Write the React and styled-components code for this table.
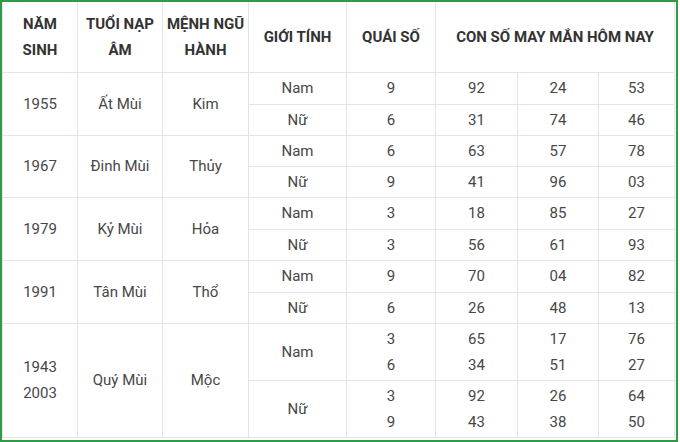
import React from "react";
import styled, { createGlobalStyle } from "styled-components";

const Global = createGlobalStyle`
  html, body { margin: 0; padding: 0; background: #ffffff; }
  body { font-family: Roboto, "Noto Sans", "Liberation Sans", sans-serif; }
`;

const Frame = styled.div`
  box-sizing: border-box;
  width: 678px;
  height: 442px;
  border: 2px solid #2f9b43;
  background: #ffffff;
  overflow: hidden;
`;

const Table = styled.table`
  width: 672px;
  border-collapse: collapse;
  table-layout: fixed;
  font-family: Roboto, "Noto Sans", "Liberation Sans", sans-serif;
`;

const Col = styled.col`
  width: ${(p) => p.$w}px;
`;

const HeadRow = styled.tr`
  height: 70px;
`;

const HeadCell = styled.th`
  border: 1px solid #e3e3e9;
  border-top: none;
  padding: 0;
  font-size: 15px;
  line-height: 26px;
  font-weight: 700;
  color: #333333;
  text-align: center;
  vertical-align: middle;
  white-space: nowrap;
  overflow: visible;
`;

const BodyRow = styled.tr`
  height: ${(p) => p.$h}px;
`;

const Cell = styled.td`
  border: 1px solid #e3e3e9;
  padding: 0 4px;
  font-size: 15px;
  line-height: 26px;
  font-weight: 400;
  color: #474747;
  text-align: center;
  vertical-align: middle;
  white-space: nowrap;
`;

const Lines = ({ items }) =>
  items.map((t, i) => (
    <React.Fragment key={i}>
      {i > 0 && <br />}
      {t}
    </React.Fragment>
  ));

const groups = [
  {
    years: ["1955"],
    napAm: "Ất Mùi",
    menh: "Kim",
    heights: [32, 31],
    rows: [
      { g: "Nam", q: ["9"], n: [["92"], ["24"], ["53"]] },
      { g: "Nữ", q: ["6"], n: [["31"], ["74"], ["46"]] },
    ],
  },
  {
    years: ["1967"],
    napAm: "Đinh Mùi",
    menh: "Thủy",
    heights: [31, 31],
    rows: [
      { g: "Nam", q: ["6"], n: [["63"], ["57"], ["78"]] },
      { g: "Nữ", q: ["9"], n: [["41"], ["96"], ["03"]] },
    ],
  },
  {
    years: ["1979"],
    napAm: "Kỷ Mùi",
    menh: "Hỏa",
    heights: [32, 31],
    rows: [
      { g: "Nam", q: ["3"], n: [["18"], ["85"], ["27"]] },
      { g: "Nữ", q: ["3"], n: [["56"], ["61"], ["93"]] },
    ],
  },
  {
    years: ["1991"],
    napAm: "Tân Mùi",
    menh: "Thổ",
    heights: [32, 31],
    rows: [
      { g: "Nam", q: ["9"], n: [["70"], ["04"], ["82"]] },
      { g: "Nữ", q: ["6"], n: [["26"], ["48"], ["13"]] },
    ],
  },
  {
    years: ["1943", "2003"],
    napAm: "Quý Mùi",
    menh: "Mộc",
    heights: [57, 57],
    rows: [
      { g: "Nam", q: ["3", "6"], n: [["65", "34"], ["17", "51"], ["76", "27"]] },
      { g: "Nữ", q: ["3", "9"], n: [["92", "43"], ["26", "38"], ["64", "50"]] },
    ],
  },
];

const widths = [75, 85, 86, 98, 89, 82, 81, 76];

export default function App() {
  return (
    <>
      <Global />
      <Frame>
        <Table>
          <colgroup>
            {widths.map((w, i) => (
              <Col key={i} $w={w} />
            ))}
          </colgroup>
          <thead>
            <HeadRow>
              <HeadCell>
                NĂM
                <br />
                SINH
              </HeadCell>
              <HeadCell>
                TUỔI NẠP
                <br />
                ÂM
              </HeadCell>
              <HeadCell>
                MỆNH NGŨ
                <br />
                HÀNH
              </HeadCell>
              <HeadCell>GIỚI TÍNH</HeadCell>
              <HeadCell>QUÁI SỐ</HeadCell>
              <HeadCell colSpan={3}>CON SỐ MAY MẮN HÔM NAY</HeadCell>
            </HeadRow>
          </thead>
          <tbody>
            {groups.map((grp) =>
              grp.rows.map((r, ri) => (
                <BodyRow key={grp.napAm + ri} $h={grp.heights[ri]}>
                  {ri === 0 && (
                    <>
                      <Cell rowSpan={2}>
                        <Lines items={grp.years} />
                      </Cell>
                      <Cell rowSpan={2}>{grp.napAm}</Cell>
                      <Cell rowSpan={2}>{grp.menh}</Cell>
                    </>
                  )}
                  <Cell>{r.g}</Cell>
                  <Cell>
                    <Lines items={r.q} />
                  </Cell>
                  {r.n.map((col, ci) => (
                    <Cell key={ci}>
                      <Lines items={col} />
                    </Cell>
                  ))}
                </BodyRow>
              ))
            )}
          </tbody>
        </Table>
      </Frame>
    </>
  );
}
